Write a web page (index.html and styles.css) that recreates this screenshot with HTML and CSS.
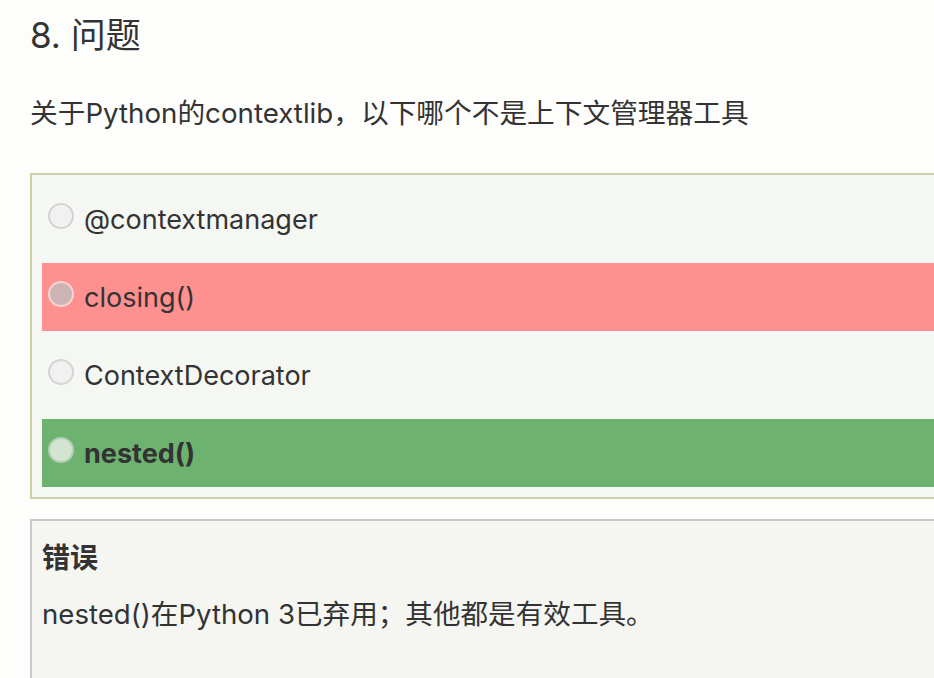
FILE: index.html
```html
<!DOCTYPE html>
<html lang="zh-CN">
<head>
<meta charset="utf-8">
<title>8. 问题</title>
<link rel="stylesheet" href="styles.css">
</head>
<body>
<main class="page">
  <h2 class="q-title">8. 问题</h2>
  <p class="q-text">关于Python的contextlib，以下哪个不是上下文管理器工具</p>
  <div class="options">
    <div class="option">
      <span class="radio"></span>
      <span class="label">@contextmanager</span>
    </div>
    <div class="option wrong">
      <span class="radio"></span>
      <span class="label">closing()</span>
    </div>
    <div class="option">
      <span class="radio"></span>
      <span class="label">ContextDecorator</span>
    </div>
    <div class="option right">
      <span class="radio"></span>
      <span class="label">nested()</span>
    </div>
  </div>
  <div class="explain">
    <h3 class="explain-title">错误</h3>
    <p class="explain-text">nested()在Python 3已弃用；其他都是有效工具。</p>
  </div>
</main>
</body>
</html>
```
FILE: styles.css
```css
html, body {
  margin: 0;
  padding: 0;
  background: #fdfdfc;
  overflow: hidden;
}
body {
  font-family: "Inter", "Noto Sans CJK SC", sans-serif;
  color: #333;
}
.page {
  padding: 14px 0 0 30px;
  width: 940px;
}
.q-title {
  margin: 0;
  font-size: 35px;
  line-height: 42px;
  font-weight: 400;
  color: #333;
}
.q-text {
  margin: 37px 0 0;
  font-size: 27.7px;
  line-height: 40px;
}
.options {
  margin-top: 40px;
  border: 2px solid #c6d2a6;
  background: #f5f7f2;
  padding: 10px;
  display: flex;
  flex-direction: column;
  gap: 10px;
}
.option {
  height: 68px;
  display: flex;
  align-items: center;
  gap: 10px;
  padding-left: 6px;
  font-size: 27px;
}
.radio {
  width: 22px;
  height: 22px;
  border-radius: 50%;
  border: 2px solid #d4d4d4;
  background: #f1f1f1;
  margin-top: -7px;
  flex: none;
}
.option.wrong {
  background: #fe9090;
}
.option.wrong .radio {
  border-color: #f7d3d3;
  background: #cdb4b4;
}
.option.right {
  background: #6db36f;
  font-weight: 700;
}
.option.right .radio {
  border-color: #b5cfb5;
  background: #d3e4d3;
}
.explain {
  margin-top: 20px;
  border: 2px solid #c9c9c9;
  background: #f5f6f2;
  padding: 16px 10px 60px;
}
.explain-title {
  margin: 0;
  font-size: 28px;
  line-height: 42px;
  font-weight: 700;
}
.explain-text {
  margin: 14px 0 0;
  font-size: 27.6px;
  line-height: 42px;
}
```
